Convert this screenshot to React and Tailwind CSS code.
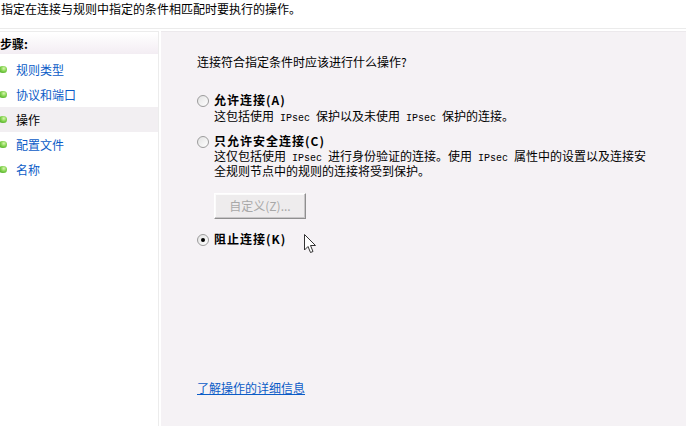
import React from "react";

const F = { fontFamily: '"Noto Sans CJK SC", "Noto Sans", sans-serif' };

function Bullet() {
  return (
    <span
      className="absolute left-[-1px] top-[9px] h-[7px] w-[8px] rounded-full"
      style={{ background: "radial-gradient(circle at 60% 35%, #d8f5b0 0%, #7ed04a 45%, #3f9a1e 100%)" }}
    />
  );
}

function Step({ label, active }) {
  return (
    <div className={`relative h-[25px] flex items-center pl-[16px] ${active ? "bg-[#f2eff2] text-black" : "text-[#0b5cc7]"}`}>
      <Bullet />
      <span className="text-[12px] leading-[12px]">{label}</span>
    </div>
  );
}

function Radio({ checked }) {
  return (
    <span className="mt-[1px] flex h-[12px] w-[12px] shrink-0 items-center justify-center rounded-full border border-[#9c9c9c] bg-gradient-to-br from-[#e2e2e2] to-white">
      {checked && <span className="h-[4px] w-[4px] rounded-full bg-black" />}
    </span>
  );
}

const M = ({ children }) => (
  <span className="text-[10px] leading-none" style={{ fontFamily: '"Liberation Mono", monospace' }}>{children}</span>
);

export default function App() {
  return (
    <div className="relative h-[426px] w-[686px] overflow-hidden bg-white text-black" style={F}>
      <div className="h-[29px] border-b border-[#ebebeb] pl-[1px] pt-[3px] text-[12px] leading-[12px]">
        指定在连接与规则中指定的条件相匹配时要执行的操作。
      </div>
      <div className="mt-[2px] flex h-[395px]">
        <div className="w-[159px] border-r border-t border-[#ececec]">
          <div className="mt-[1px] flex h-[21px] items-center bg-gradient-to-b from-white to-[#f3edf3] text-[12px] font-bold leading-[12px]">
            步骤:
          </div>
          <div className="mt-[3px]">
            <Step label="规则类型" />
            <Step label="协议和端口" />
            <Step label="操作" active />
            <Step label="配置文件" />
            <Step label="名称" />
          </div>
        </div>
        <div className="ml-[2px] flex-1 border-t border-[#ece9ec] bg-[#f5f2f5] pl-[36px] pt-[24px] text-[12px] leading-[12px]">
          <div>连接符合指定条件时应该进行什么操作?</div>

          <div className="mt-[26px] flex gap-[5px]">
            <Radio />
            <div>
              <div className="font-bold tracking-[1px]">允许连接(A)</div>
              <div className="mt-[4px]">这包括使用<M> IPsec </M>保护以及未使用<M> IPsec </M>保护的连接。</div>
            </div>
          </div>

          <div className="mt-[11px] flex gap-[5px]">
            <Radio />
            <div>
              <div className="font-bold tracking-[1px]">只允许安全连接(C)</div>
              <div className="mt-[2px] leading-[14px]">
                这仅包括使用<M> IPsec </M>进行身份验证的连接。使用<M> IPsec </M>属性中的设置以及连接安
                <br />
                全规则节点中的规则的连接将受到保护。
              </div>
              <div className="mt-[15px] flex h-[26px] w-[92px] items-center justify-center border border-t-white border-l-white border-r-[#8f8f8f] border-b-[#8f8f8f] bg-[#eeeced] text-[#a8a8a8] shadow-[inset_-1px_-1px_0_#c8c6c8,inset_1px_1px_0_#fbfbfb]">
                自定义(Z)...
              </div>
            </div>
          </div>

          <div className="mt-[14px] flex gap-[5px]">
            <Radio checked />
            <div className="font-bold tracking-[1px]">阻止连接(K)</div>
          </div>

          <div className="mt-[136px]">
            <span className="text-[#0b5cc7] underline">了解操作的详细信息</span>
          </div>
        </div>
      </div>
      <svg className="absolute left-[304px] top-[234px]" width="13" height="20" viewBox="0 0 13 20">
        <path d="M0.5 0.5 L0.5 16 L4 12.5 L6.5 18.5 L9 17.5 L6.5 11.5 L11.5 11.5 Z" fill="white" stroke="#333" strokeWidth="1" />
      </svg>
    </div>
  );
}
